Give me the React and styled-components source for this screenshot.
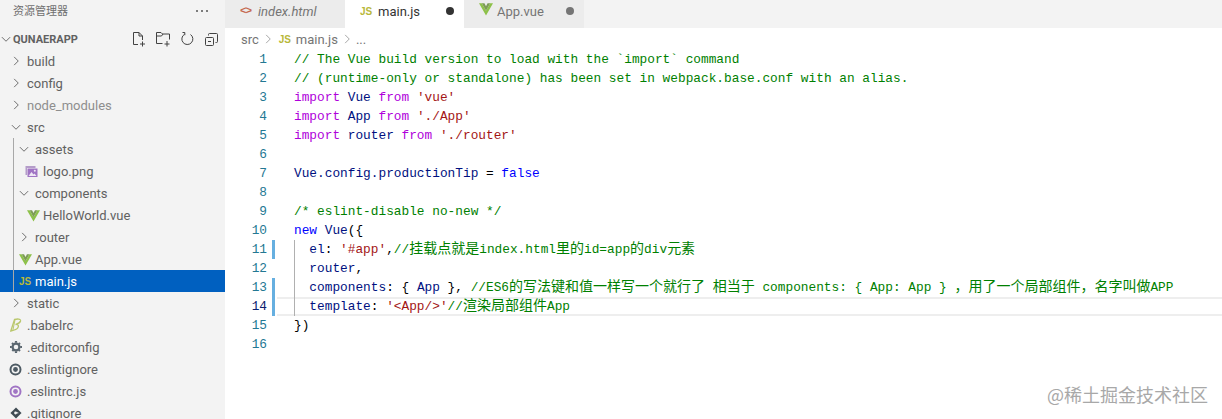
import React from "react";
import styled, { createGlobalStyle } from "styled-components";

const GlobalStyle = createGlobalStyle`
    html, body {
        margin: 0;
        padding: 0;
        background: #fff;
        overflow: hidden;
    }
    #root {
        width: 1222px;
        height: 419px;
    }
`

const UI_FONT = `Roboto, "Noto Sans CJK SC", sans-serif`
const MONO_FONT = `"Liberation Mono", "Noto Sans CJK SC", monospace`

function Chevron({ open }) {
    return (
        <ChevronSvg viewBox="0 0 16 16" fill="none" stroke="currentColor" strokeWidth="1">
            {open ? <path d="M2.5 5.5 8 11l5.5-5.5" /> : <path d="M5.5 2.5 11 8l-5.5 5.5" />}
        </ChevronSvg>
    )
}

function VueIcon({ size = 13 }) {
    return (
        <svg width={size} height={size} viewBox="0 0 16 16">
            <path d="M0 1.5h3.2L8 10l4.800-8.500H16L8 15.500z" fill="#8dc149" />
            <path d="M3.200 1.500h3L8 4.800l1.800-3.300h3L8 10z" fill="#7d9c55" />
        </svg>
    )
}

function ImageIcon() {
    return (
        <svg width="13" height="13" viewBox="0 0 13 13">
            <path d="M0.500 1h10v2H2v7H0.500z" fill="#b49cc9" />
            <rect x="2.500" y="3.500" width="10" height="8.500" fill="#a074c4" />
            <circle cx="9.800" cy="5.800" r="1" fill="#f0e8f6" />
            <path d="M3.500 11l3-4 2 2.500 1-1 2 2.500z" fill="#efe8f5" />
        </svg>
    )
}

function BabelIcon() {
    return (
        <svg width="12" height="14" viewBox="0 0 12 14" fill="none" stroke="#b9c76c" strokeWidth="1.300">
            <path d="M4.500 1.500C7 0.800 11 0.500 10.500 3 10 5.200 7 6 5.500 6.500 8 6.200 9 7.500 8 9.500 7 11.500 3 12.500 0.800 13z" />
            <path d="M5 1.800 2.800 12.500" strokeWidth="1" />
        </svg>
    )
}

function GearIcon() {
    return (
        <svg width="12" height="12" viewBox="0 0 13 13">
            <circle cx="6.500" cy="6.500" r="3.700" fill="none" stroke="#5b6770" strokeWidth="2.400" />
            <path d="M5.300 0h2.400v2H5.300zM5.300 11h2.400v2H5.300zM0 5.300h2v2.400H0zM11 5.300h2v2.400h-2zM1.400 3l1.600-1.600 1.300 1.300-1.600 1.600zM8.700 10.300l1.600-1.600 1.300 1.300-1.600 1.600zM10 1.400L11.600 3l-1.300 1.300-1.600-1.600zM3 8.700l1.600 1.600-1.300 1.300L1.700 10z" fill="#5b6770" />
        </svg>
    )
}

function RingIcon({ color, inner }) {
    return (
        <svg width="13" height="13" viewBox="0 0 13 13">
            <circle cx="6.500" cy="6.500" r="5" fill="none" stroke={color} strokeWidth="2" />
            <circle cx="6.500" cy="6.500" r="2.400" fill={inner} />
        </svg>
    )
}

function GitIcon() {
    return (
        <svg width="12" height="12" viewBox="0 0 13 13">
            <path d="M6.500 0.500l6 6-6 6-6-6z" fill="#3f4a52" />
            <circle cx="6" cy="6.500" r="1.500" fill="#f3f3f3" />
            <path d="M6 6l3 0.500" stroke="#f3f3f3" strokeWidth="1.200" />
        </svg>
    )
}

function NewFileIcon() {
    return (
        <svg width="16" height="16" viewBox="0 0 16 16" fill="none" stroke="#424242">
            <path d="M7 13.500H2.500v-12H8L11.500 5v4M8 1.500V5h3.500M11.500 10.500v5M9 13h5" />
        </svg>
    )
}

function NewFolderIcon() {
    return (
        <svg width="16" height="16" viewBox="0 0 16 16" fill="none" stroke="#424242">
            <path d="M7.500 12.500h-6v-11h4.500l1.500 1.500h7v5.500M1.500 5h5l1.500-2M12 10v5.500M9.500 13h5" />
        </svg>
    )
}

function RefreshIcon() {
    return (
        <svg width="16" height="16" viewBox="0 0 16 16" fill="none" stroke="#424242">
            <path d="M5.500 3.300A5.500 5.500 0 1 0 11.500 3.500" />
            <path d="M3.500 1.500h2.300v2.700" />
        </svg>
    )
}

function CollapseIcon() {
    return (
        <svg width="16" height="16" viewBox="0 0 16 16" fill="none" stroke="#424242">
            <rect x="2.500" y="6.500" width="8" height="8" rx="1" />
            <path d="M5.500 4.500v-1a1 1 0 0 1 1-1h7a1 1 0 0 1 1 1v7a1 1 0 0 1-1 1h-1M5 10.500h3" />
        </svg>
    )
}

function Code({ text, color }) {
    // CJK is wider than the latin cell here, so it gets its own font size
    const parts = text.split(/([\u4e00-\u9fff\uff0c]+)/)
    return (
        <Token $color={color}>
            {parts.map((part, i) => (i % 2 ? <Cjk key={i}>{part}</Cjk> : part))}
        </Token>
    )
}

const KEYWORD = "#af00db"
const BLUE = "#0000ff"
const COMMENT = "#008000"
const STRING = "#a31515"
const VARIABLE = "#001080"
const PLAIN = "#000000"

const lines = [
    { tokens: [["// The Vue build version to load with the `import` command", COMMENT]] },
    { tokens: [["// (runtime-only or standalone) has been set in webpack.base.conf with an alias.", COMMENT]] },
    { tokens: [["import", KEYWORD], [" Vue ", VARIABLE], ["from", KEYWORD], [" ", PLAIN], ["'vue'", STRING]] },
    { tokens: [["import", KEYWORD], [" App ", VARIABLE], ["from", KEYWORD], [" ", PLAIN], ["'./App'", STRING]] },
    { tokens: [["import", KEYWORD], [" router ", VARIABLE], ["from", KEYWORD], [" ", PLAIN], ["'./router'", STRING]] },
    { tokens: [] },
    { tokens: [["Vue.config.productionTip", VARIABLE], [" = ", PLAIN], ["false", BLUE]] },
    { tokens: [] },
    { tokens: [["/* eslint-disable no-new */", COMMENT]] },
    { tokens: [["new", BLUE], [" ", PLAIN], ["Vue", VARIABLE], ["({", PLAIN]] },
    {
        indent: true,
        changed: true,
        tokens: [["el", VARIABLE], [": ", PLAIN], ["'#app'", STRING], [",", PLAIN], ["//挂载点就是index.html里的id=app的div元素", COMMENT]],
    },
    { indent: true, tokens: [["router", VARIABLE], [",", PLAIN]] },
    {
        indent: true,
        changed: true,
        tokens: [
            ["components", VARIABLE],
            [": { ", PLAIN],
            ["App", VARIABLE],
            [" }, ", PLAIN],
            ["//ES6的写法键和值一样写一个就行了 相当于 components: { App: App } ，用了一个局部组件，名字叫做APP", COMMENT],
        ],
    },
    {
        indent: true,
        changed: true,
        active: true,
        tokens: [["template", VARIABLE], [": ", PLAIN], ["'<App/>'", STRING], ["//渲染局部组件App", COMMENT]],
    },
    { tokens: [["})", PLAIN]] },
    { tokens: [] },
]

export default function App() {
    return (
        <Workbench>
            <GlobalStyle />
            <Sidebar>
                <SidebarTitle>
                    <span>资源管理器</span>
                    <MoreDots>
                        <i /><i /><i />
                    </MoreDots>
                </SidebarTitle>
                <ProjectHeader>
                    <ProjectChevron><Chevron open /></ProjectChevron>
                    <ProjectName>QUNAERAPP</ProjectName>
                    <Actions>
                        <NewFileIcon />
                        <NewFolderIcon />
                        <RefreshIcon />
                        <CollapseIcon />
                    </Actions>
                </ProjectHeader>
                <Row $depth={0}><Twistie><Chevron /></Twistie>build</Row>
                <Row $depth={0}><Twistie><Chevron /></Twistie>config</Row>
                <Row $depth={0} $muted><Twistie><Chevron /></Twistie>node_modules</Row>
                <Row $depth={0}><Twistie><Chevron open /></Twistie>src</Row>
                <SrcGroup>
                    <Row $depth={1}><Twistie><Chevron open /></Twistie>assets</Row>
                    <Row $depth={2}><FileIcon $x={-1}><ImageIcon /></FileIcon>logo.png</Row>
                    <Row $depth={1}><Twistie><Chevron open /></Twistie>components</Row>
                    <Row $depth={2}><FileIcon $x={1}><VueIcon /></FileIcon>HelloWorld.vue</Row>
                    <Row $depth={1}><Twistie><Chevron /></Twistie>router</Row>
                    <Row $depth={1}><FileIcon $x={1}><VueIcon /></FileIcon>App.vue</Row>
                    <Row $depth={1} $selected><FileIcon $x={1}><JsMark>JS</JsMark></FileIcon>main.js</Row>
                </SrcGroup>
                <Row $depth={0}><Twistie><Chevron /></Twistie>static</Row>
                <Row $depth={0}><FileIcon><BabelIcon /></FileIcon>.babelrc</Row>
                <Row $depth={0}><FileIcon><GearIcon /></FileIcon>.editorconfig</Row>
                <Row $depth={0}><FileIcon $x={-1}><RingIcon color="#4d5a63" inner="#4d5a63" /></FileIcon>.eslintignore</Row>
                <Row $depth={0}><FileIcon $x={-1}><RingIcon color="#a074c4" inner="#a074c4" /></FileIcon>.eslintrc.js</Row>
                <Row $depth={0}><FileIcon><GitIcon /></FileIcon>.gitignore</Row>
            </Sidebar>
            <Editor>
                <TabBar>
                    <Tab $inactive>
                        <TabIcon><HtmlMark>&lt;&gt;</HtmlMark></TabIcon>
                        <TabName $italic>index.html</TabName>
                    </Tab>
                    <Tab>
                        <TabIcon><JsMark>JS</JsMark></TabIcon>
                        <TabName $dark>main.js</TabName>
                        <DirtyDot />
                    </Tab>
                    <Tab $inactive>
                        <TabIcon><VueIcon size={14} /></TabIcon>
                        <TabName>App.vue</TabName>
                        <DirtyDot $dim />
                    </Tab>
                </TabBar>
                <Breadcrumbs>
                    <span>src</span>
                    <Crumb><Chevron /></Crumb>
                    <CrumbIcon><JsMark>JS</JsMark></CrumbIcon>
                    <span>main.js</span>
                    <Crumb><Chevron /></Crumb>
                    <span>...</span>
                </Breadcrumbs>
                <CodeArea>
                    {lines.map((line, i) => (
                        <CodeLine key={i}>
                            <LineNumber $active={line.active}>{i + 1}</LineNumber>
                            <Decoration $changed={line.changed} />
                            <LineBody $active={line.active}>
                                <LineText $indent={line.indent}>
                                    {line.tokens.map(([text, color], t) => (
                                        <Code key={t} text={text} color={color} />
                                    ))}
                                </LineText>
                            </LineBody>
                        </CodeLine>
                    ))}
                </CodeArea>
            </Editor>
            <Watermark>@稀土掘金技术社区</Watermark>
        </Workbench>
    )
}

const Workbench = styled.div`
    position: relative;
    display: flex;
    width: 1222px;
    height: 419px;
    overflow: hidden;
    background: #fff;
`

const Sidebar = styled.div`
    width: 225px;
    flex-shrink: 0;
    background: #f3f3f3;
    color: #616161;
    font-family: ${UI_FONT};
    font-size: 13px;
`

const SidebarTitle = styled.div`
    height: 27px;
    padding: 0 17px 0 13px;
    display: flex;
    justify-content: space-between;
    align-items: flex-start;
    font-size: 11px;
    line-height: 24px;
    color: #6f6f6f;
`

const MoreDots = styled.span`
    display: flex;
    gap: 3px;
    padding-top: 10px;
    i {
        width: 2px;
        height: 2px;
        border-radius: 50%;
        background: #555;
    }
`

const ProjectHeader = styled.div`
    height: 23px;
    display: flex;
    align-items: center;
`

const ProjectChevron = styled.span`
    width: 13px;
    display: flex;
    color: #424242;
`

const ProjectName = styled.span`
    flex: 1;
    padding-top: 2px;
    font-size: 11px;
    font-weight: 700;
    color: #616161;
`

const Actions = styled.div`
    display: flex;
    gap: 8px;
    padding-right: 6px;
`

const ChevronSvg = styled.svg`
    width: 12px;
    height: 12px;
    display: block;
`

const Row = styled.div`
    height: 22px;
    display: flex;
    align-items: center;
    padding-left: ${props => props.$depth * 8 + 10}px;
    color: ${props => (props.$selected ? "#fff" : props.$muted ? "#8e8e8e" : "#616161")};
    background: ${props => (props.$selected ? "#0060c0" : "transparent")};
    white-space: nowrap;
`

const Twistie = styled.span`
    width: 17px;
    display: flex;
    color: #424242;
    flex-shrink: 0;
`

const FileIcon = styled.span`
    width: 17px;
    padding-left: ${props => (props.$x || 0) + 1}px;
    margin-left: -1px;
    margin-right: 1px;
    box-sizing: border-box;
    display: flex;
    flex-shrink: 0;
`

const SrcGroup = styled.div`
    position: relative;
    &::before {
        content: "";
        position: absolute;
        left: 13px;
        top: 0;
        bottom: 0;
        width: 1px;
        background: #a8a8a8;
    }
`

const JsMark = styled.span`
    font-family: "Liberation Sans", sans-serif;
    font-size: 10px;
    font-weight: 700;
    color: #b8b83a;
`

const HtmlMark = styled.span`
    font-family: "Liberation Mono", monospace;
    font-size: 11px;
    font-weight: 700;
    letter-spacing: -1px;
    color: #c5694f;
`

const Editor = styled.div`
    flex: 1;
    min-width: 0;
    display: flex;
    flex-direction: column;
`

const TabBar = styled.div`
    height: 28px;
    display: flex;
    background: #f3f3f3;
    flex-shrink: 0;
`

const Tab = styled.div`
    width: 120px;
    box-sizing: border-box;
    height: 28px;
    padding: 2px 0 0 15px;
    display: flex;
    align-items: flex-start;
    line-height: 19px;
    background: ${props => (props.$inactive ? "#ececec" : "#fff")};
    font-family: ${UI_FONT};
    font-size: 13px;
    &:nth-child(2) {
        width: 119px;
    }
`

const TabIcon = styled.span`
    width: 18px;
    display: flex;
    flex-shrink: 0;
`

const TabName = styled.span`
    flex: 1;
    font-style: ${props => (props.$italic ? "italic" : "normal")};
    color: ${props => (props.$dark ? "#333" : "#757575")};
`

const DirtyDot = styled.span`
    width: 8px;
    height: 8px;
    margin: 5px 10px 0 0;
    border-radius: 50%;
    background: ${props => (props.$dim ? "#757575" : "#333")};
`

const Breadcrumbs = styled.div`
    height: 22px;
    padding-left: 16px;
    display: flex;
    align-items: center;
    gap: 3px;
    font-family: ${UI_FONT};
    font-size: 13px;
    color: #757575;
    flex-shrink: 0;
`

const Crumb = styled.span`
    display: flex;
    color: #888;
`

const CrumbIcon = styled.span`
    width: 14px;
    margin-left: 2px;
    display: flex;
`

const CodeArea = styled.div`
    font-family: ${MONO_FONT};
    font-size: 12.8px;
`

const CodeLine = styled.div`
    height: 19px;
    display: flex;
    line-height: 19px;
`

const LineNumber = styled.div`
    width: 42px;
    text-align: right;
    color: ${props => (props.$active ? "#0b216f" : "#237893")};
    flex-shrink: 0;
`

const Decoration = styled.div`
    width: 3px;
    margin-left: 5px;
    margin-right: 2px;
    background: ${props => (props.$changed ? "#66afe0" : "transparent")};
    flex-shrink: 0;
`

const LineBody = styled.div`
    flex: 1;
    box-sizing: border-box;
    padding-left: 17px;
    white-space: pre;
    ${props => props.$active && `
        box-shadow: inset 0 2px 0 #eeeeee, inset 0 -2px 0 #eeeeee;
    `}
`

const LineText = styled.div`
    height: 19px;
    padding-left: ${props => (props.$indent ? "15.360px" : "0")};
    ${props => props.$indent && "box-shadow: inset 1px 0 0 #b0b0b0;"}
`

const Token = styled.span`
    color: ${props => props.$color};
`

const Cjk = styled.span`
    font-size: 14px;
`

const Watermark = styled.div`
    position: absolute;
    right: 14px;
    bottom: 13px;
    font-family: "Noto Sans CJK SC", sans-serif;
    font-size: 18px;
    line-height: 24px;
    color: #a8a8a8;
`
